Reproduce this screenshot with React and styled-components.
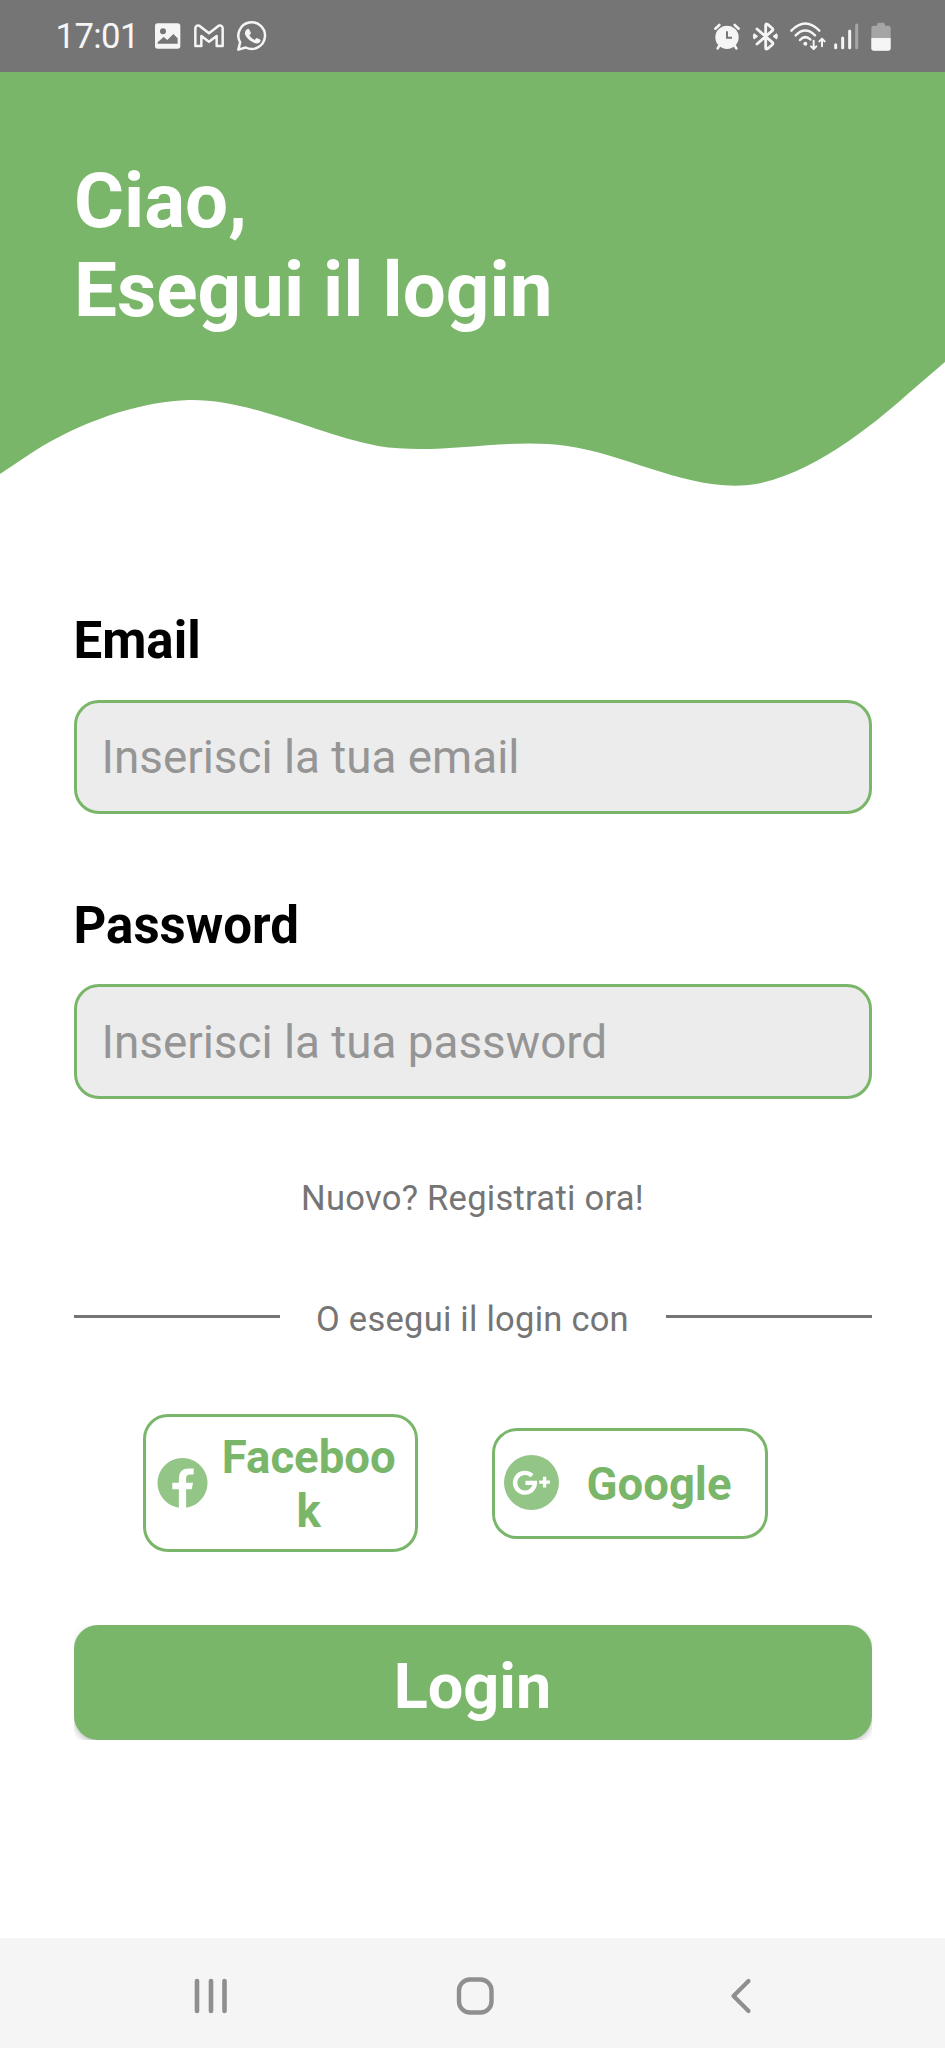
import React from "react";
import styled, { createGlobalStyle } from "styled-components";

const green = "#7ab66a";
const softGreen = "#93c587";

const GlobalStyle = createGlobalStyle`
  * { box-sizing: border-box; }
  body { margin: 0; background: #fff; font-family: Roboto, "Liberation Sans", sans-serif; }
`;

const Screen = styled.div`
  width: 945px;
  height: 2048px;
  display: flex;
  flex-direction: column;
  background: #fff;
  overflow: hidden;
`;

const StatusBar = styled.header`
  flex: none;
  height: 72px;
  display: flex;
  align-items: center;
  justify-content: space-between;
  padding: 0 54px 0 55.5px;
  background: #757575;
  color: #f5f5f5;
`;

const StatusGroup = styled.div`
  display: flex;
  align-items: center;
  gap: ${(p) => p.$gap}px;
`;

const Clock = styled.span`
  width: 86px;
  font-size: 34.7px;
  line-height: 40px;
  letter-spacing: -0.6px;
  white-space: nowrap;
`;

const Icon = styled.svg`
  display: block;
  flex: none;
  width: ${(p) => p.$w}px;
  height: ${(p) => p.$h}px;
  overflow: visible;
`;

const Hero = styled.section`
  flex: none;
  height: 418px;
  display: grid;
`;

const Wave = styled.svg`
  grid-area: 1 / 1;
  display: block;
  width: 945px;
  height: 418px;
`;

const Title = styled.h1`
  grid-area: 1 / 1;
  z-index: 1;
  margin: 0;
  padding: 85px 74px 0;
  color: #fff;
  font-size: 76.4px;
  line-height: 89.3px;
  font-weight: 700;
`;

const Form = styled.main`
  flex: 1;
  display: flex;
  flex-direction: column;
  padding: 118px 73.5px 0;
`;

const Field = styled.label`
  display: flex;
  flex-direction: column;
  height: 206px;
  margin-bottom: 78.5px;
`;

const FieldName = styled.span`
  height: 92px;
  padding-top: 1px;
  color: #000;
  font-size: 51px;
  line-height: 64px;
  font-weight: 700;
`;

const TextInput = styled.input`
  width: 100%;
  height: 115px;
  padding: 2px 25px 0;
  border: 3px solid ${green};
  border-radius: 25px;
  outline: none;
  background: #ececec;
  font: 400 45.8px Roboto, "Liberation Sans", sans-serif;
  &::placeholder { color: #959595; opacity: 1; }
`;

const SignUp = styled.a`
  align-self: center;
  height: 44px;
  color: #757575;
  font-size: 34.5px;
  line-height: 43px;
  letter-spacing: 0.27px;
`;

const Divider = styled.div`
  display: flex;
  align-items: center;
  justify-content: space-between;
  height: 44px;
  margin-top: 76px;
  color: #757575;
  font-size: 34.5px;
  line-height: 44px;
  letter-spacing: 0.25px;
`;

const Rule = styled.span`
  width: 206px;
  height: 3px;
  margin-bottom: 5px;
  background: #757575;
`;

const SocialRow = styled.div`
  display: flex;
  align-items: center;
  gap: 74px;
  height: 138px;
  margin-top: 73px;
  padding-left: 69px;
`;

const SocialButton = styled.button`
  display: flex;
  align-items: center;
  width: 275.5px;
  height: ${(p) => p.$height}px;
  padding: 0 5px 0 ${(p) => p.$padLeft}px;
  border: 3px solid ${green};
  border-radius: 25px;
  background: #fff;
  color: ${green};
  font: 700 45.5px/53.5px Roboto, "Liberation Sans", sans-serif;
`;

const SocialLabel = styled.span`
  flex: 1;
  padding: 3px 10px 0;
  text-align: center;
  word-break: break-all;
`;

const LoginFrame = styled.div`
  margin-top: 73px;
  height: 115px;
  overflow: hidden;
`;

const LoginButton = styled.button`
  display: block;
  width: 100%;
  height: 115px;
  padding: 8px 0 0;
  border: 0;
  border-radius: 24px;
  background: ${green};
  box-shadow: 0 3px 6px rgba(0, 0, 0, 0.24);
  color: #fff;
  font: 700 63px/74px Roboto, "Liberation Sans", sans-serif;
`;

const NavBar = styled.nav`
  flex: none;
  height: 110px;
  display: flex;
  align-items: center;
  justify-content: space-between;
  padding: 5px 193px 0 194px;
  background: #f5f5f5;
`;

const HomeButton = styled.span`
  margin-right: 8px;
`;

const PictureIcon = () => (
  <Icon $w={26} $h={26} viewBox="0 0 78 78">
    <path
      fill="currentColor"
      fillRule="evenodd"
      d="M8 1H68Q76 1 76 9V69Q76 77 68 77H8Q0 77 0 69V9Q0 1 8 1ZM24 16A9 9 0 1 0 24 34A9 9 0 1 0 24 16ZM8 62H68V46L55 33L37 51L26 42L8 58Z"
    />
  </Icon>
);

const MailIcon = () => (
  <Icon $w={30} $h={24} viewBox="0 0 90 72">
    <path
      fill="none"
      stroke="currentColor"
      strokeWidth="7.5"
      strokeLinejoin="round"
      d="M4 66V12Q6 2 16 5L45 28L74 5Q84 2 86 12V66H68V36L45 53L22 36V66Z"
    />
  </Icon>
);

const ChatIcon = () => (
  <Icon $w={30} $h={30} viewBox="0 0 90 90">
    <path
      fill="none"
      stroke="currentColor"
      strokeWidth="7.5"
      strokeLinejoin="round"
      d="M4 86L9.500 64A40 40 0 1 1 26 79.500Z"
    />
    <path
      fill="currentColor"
      d="M31 24Q35 22 37 26L42 36Q42 39 37 43Q43 53 53 57Q57 51 60 51L70 56Q72 59 68 64Q60 71 48 64Q30 55 24 40Q22 29 31 24Z"
    />
  </Icon>
);

const AlarmIcon = () => (
  <Icon $w={26} $h={27} viewBox="0 0 78 81">
    <g fill="none" stroke="currentColor" strokeWidth="8" strokeLinecap="round">
      <path d="M4 17L16 6M74 17L62 6M16 68L11 76M62 68L67 76" />
    </g>
    <circle cx="39" cy="43" r="35" fill="currentColor" />
    <path d="M39 25V44H54" fill="none" stroke="#757575" strokeWidth="6" />
  </Icon>
);

const BluetoothIcon = () => (
  <Icon $w={25} $h={29} viewBox="0 0 75 87">
    <path
      fill="none"
      stroke="currentColor"
      strokeWidth="8.5"
      strokeLinejoin="round"
      strokeLinecap="round"
      d="M12 21L58 61Q62 65 57 69L44 80Q38 84 38 77V10Q38 3 44 7L57 18Q62 22 58 26L12 66"
    />
    <path
      d="M3 35L14 43L3 51Q-1 43 3 35ZM71 35L60 43L71 51Q75 43 71 35Z"
      fill="currentColor"
      stroke="currentColor"
      strokeWidth="3"
      strokeLinejoin="round"
    />
  </Icon>
);

const WifiIcon = () => (
  <Icon $w={36} $h={29} viewBox="0 0 108 87">
    <g fill="none" stroke="currentColor" strokeWidth="7.500" strokeLinecap="round" strokeLinejoin="round">
      <path d="M4 26Q46 -17 88 26M17 40Q46 11 75 40M30 54Q45 38 61 52" />
      <path d="M71 56V80M63 73L71 81L79 73M96 73V51M88 58L96 50L104 58" strokeWidth="6" />
    </g>
    <circle cx="46" cy="65" r="6" fill="currentColor" />
  </Icon>
);

const SignalIcon = () => (
  <Icon $w={25} $h={27} viewBox="0 0 75 81">
    <g stroke="currentColor" strokeWidth="9" strokeLinecap="round">
      <path d="M5 65V74M26 45V74M47 24V74" />
      <path d="M68 6V74" opacity=".38" />
    </g>
  </Icon>
);

const BatteryIcon = () => (
  <Icon $w={20} $h={29} viewBox="0 0 60 87">
    <path
      d="M18 8Q18 2 24 2H36Q42 2 42 8V11H52Q59 11 59 18V78Q59 86 51 86H9Q1 86 1 78V18Q1 11 8 11H18Z"
      fill="#a5a5a5"
    />
    <path d="M1 48H59V78Q59 86 51 86H9Q1 86 1 78Z" fill="currentColor" />
  </Icon>
);

const FacebookIcon = () => (
  <Icon $w={51} $h={50} viewBox="0 0 152 152">
    <path
      fill={softGreen}
      d="M65 151A76 76 0 1 1 87 151V95H104L108 75H87V62Q87 50 99 50H110V32H95Q65 32 65 62V75H45V95H65Z"
    />
  </Icon>
);

const GoogleBadge = styled.span`
  flex: none;
  margin-bottom: 2px;
`;

const GooglePlusIcon = () => (
  <Icon $w={55} $h={55} viewBox="0 0 164 164">
    <circle cx="82" cy="82" r="82" fill={softGreen} />
    <g fill="none" stroke="#fff">
      <path d="M83.500 62A29.500 29.500 0 1 0 92 83H64" strokeWidth="13" />
      <path d="M105 81H137M121 65V97" strokeWidth="10" />
    </g>
  </Icon>
);

const RecentsIcon = () => (
  <Icon $w={34} $h={36} viewBox="0 0 34 36">
    <path d="M3 3V33M17 3V33M30.500 3V33" stroke="#8f8f8f" strokeWidth="4.600" strokeLinecap="round" />
  </Icon>
);

const HomeIcon = () => (
  <Icon $w={38} $h={38} viewBox="0 0 38 38">
    <rect x="3" y="2.500" width="32.500" height="33" rx="11" fill="none" stroke="#8f8f8f" strokeWidth="4.400" />
  </Icon>
);

const BackIcon = () => (
  <Icon $w={22} $h={36} viewBox="0 0 22 36">
    <path d="M18.500 3L3.500 18L18.500 33" fill="none" stroke="#8f8f8f" strokeWidth="4.200" strokeLinecap="round" strokeLinejoin="round" />
  </Icon>
);

export default function App() {
  return (
    <>
      <GlobalStyle />
      <Screen>
        <StatusBar>
          <StatusGroup $gap={13}>
            <Clock>17:01</Clock>
            <PictureIcon />
            <MailIcon />
            <ChatIcon />
          </StatusGroup>
          <StatusGroup $gap={12.5}>
            <AlarmIcon />
            <BluetoothIcon />
            <StatusGroup $gap={7.5}>
              <WifiIcon />
              <SignalIcon />
            </StatusGroup>
            <BatteryIcon />
          </StatusGroup>
        </StatusBar>
        <Hero>
          <Wave viewBox="0 72 945 418">
            <path
              fill={green}
              d="M0 72V474L31.500 453C63 432 126 402 189 400C252 399 315 434 378 446C441 456 504 437 567 446C630 455 693 494 756 484C819 472 882 417 913.500 389L945 362V72Z"
            />
          </Wave>
          <Title>
            Ciao,
            <br />
            Esegui il login
          </Title>
        </Hero>
        <Form>
          <Field>
            <FieldName>Email</FieldName>
            <TextInput type="email" placeholder="Inserisci la tua email" />
          </Field>
          <Field>
            <FieldName>Password</FieldName>
            <TextInput type="password" placeholder="Inserisci la tua password" />
          </Field>
          <SignUp>Nuovo? Registrati ora!</SignUp>
          <Divider>
            <Rule />
            <span>O esegui il login con</span>
            <Rule />
          </Divider>
          <SocialRow>
            <SocialButton $height={138} $padLeft={11}>
              <FacebookIcon />
              <SocialLabel>Facebook</SocialLabel>
            </SocialButton>
            <SocialButton $height={111} $padLeft={8.5}>
              <GoogleBadge>
                <GooglePlusIcon />
              </GoogleBadge>
              <SocialLabel>Google</SocialLabel>
            </SocialButton>
          </SocialRow>
          <LoginFrame>
            <LoginButton>Login</LoginButton>
          </LoginFrame>
        </Form>
        <NavBar>
          <RecentsIcon />
          <HomeButton>
            <HomeIcon />
          </HomeButton>
          <BackIcon />
        </NavBar>
      </Screen>
    </>
  );
}
